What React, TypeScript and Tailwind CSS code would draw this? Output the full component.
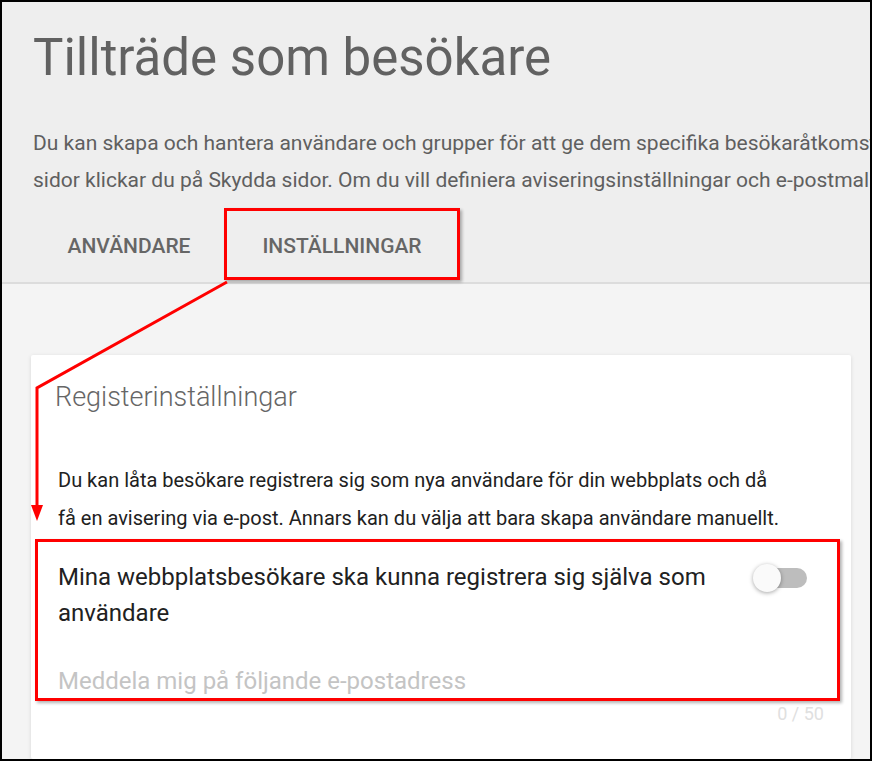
import React from "react";

const font = { fontFamily: "Roboto, 'Noto Sans', Arial, sans-serif" };

function Toggle() {
  return (
    <div className="relative w-[54px] h-[28px] shrink-0">
      <div className="absolute left-[12px] top-[4px] w-[42px] h-[20px] rounded-full bg-[#bdbdbd]" />
      <div className="absolute left-0 top-0 w-[28px] h-[28px] rounded-full bg-[#fafafa] shadow-[0_1px_4px_rgba(0,0,0,0.35)]" />
    </div>
  );
}

function Annotation() {
  return (
    <svg
      className="absolute left-0 top-0 pointer-events-none"
      width="872"
      height="761"
      viewBox="0 0 872 761"
    >
      <polyline
        points="225,280 35,386 35,504"
        fill="none"
        stroke="#ff0000"
        strokeWidth="3"
      />
      <polygon points="29,503 41,503 35,519" fill="#ff0000" />
    </svg>
  );
}

export default function App() {
  return (
    <div
      className="relative w-[872px] h-[761px] border-2 border-black overflow-hidden bg-[#f4f4f4] flex flex-col"
      style={font}
    >
      <header className="bg-[#eeeeee] border-b-2 border-[#dcdcdc] shrink-0">
        <h1 className="pl-[31px] pt-[26px] text-[51px] leading-[60px] text-[#616161] font-normal">
          Tillträde som besökare
        </h1>
        <div className="pl-[31px] pt-[37px] text-[21px] leading-[37px] text-[#5f5f5f] whitespace-nowrap">
          <p>
            Du kan skapa och hantera användare och grupper för att ge dem specifika besökaråtkomst till dina sidor.
          </p>
          <p>
            sidor klickar du på Skydda sidor. Om du vill definiera aviseringsinställningar och e-postmallar klickar du på Inställningar.
          </p>
        </div>
        <nav className="flex pl-[33px] pt-[9px] h-[83px]">
          <div className="w-[188px] h-[72px] pt-[5px] flex items-center justify-center text-[21px] font-medium text-[#666666] uppercase">
            Användare
          </div>
          <div className="w-[236px] h-[72px] ml-[1px] pt-[5px] border-[3px] border-[#ff0000] shadow-[2px_2px_3px_rgba(0,0,0,0.3)] flex items-center justify-center text-[21px] font-medium text-[#666666] uppercase">
            Inställningar
          </div>
        </nav>
      </header>

      <main className="flex-1 pl-[29px] pr-[19px] pt-[71px]">
        <section className="bg-white h-full rounded-[2px] shadow-[0_1px_4px_rgba(0,0,0,0.12)] pt-[24px] pr-[24px]">
          <h2 className="pl-[24px] text-[27px] leading-[36px] font-light text-[#666666]">
            Registerinställningar
          </h2>
          <p className="pl-[27px] pt-[46px] text-[20px] leading-[38px] text-[#212121]">
            Du kan låta besökare registrera sig som nya användare för din webbplats och då
            <br />
            få en avisering via e-post. Annars kan du välja att bara skapa användare manuellt.
          </p>
          <div className="ml-[4px] mr-[-13px] mt-[2px] border-[3px] border-[#ff0000] shadow-[2px_2px_3px_rgba(0,0,0,0.3)] pl-[20px] pr-[30px] pt-[17px]">
            <div className="flex items-start justify-between gap-10">
              <p className="text-[24px] leading-[36px] text-[#212121]">
                Mina webbplatsbesökare ska kunna registrera sig själva som användare
              </p>
              <div className="pt-[5px]">
                <Toggle />
              </div>
            </div>
            <div className="pt-[33px] text-[24px] leading-[34px] text-[#c4c4c4]">
              Meddela mig på följande e-postadress
            </div>
          </div>
          <div className="text-right pr-[3px] pt-[1px] text-[18px] leading-[24px] text-[#e0e0e0]">
            0 / 50
          </div>
        </section>
      </main>

      <Annotation />
    </div>
  );
}
